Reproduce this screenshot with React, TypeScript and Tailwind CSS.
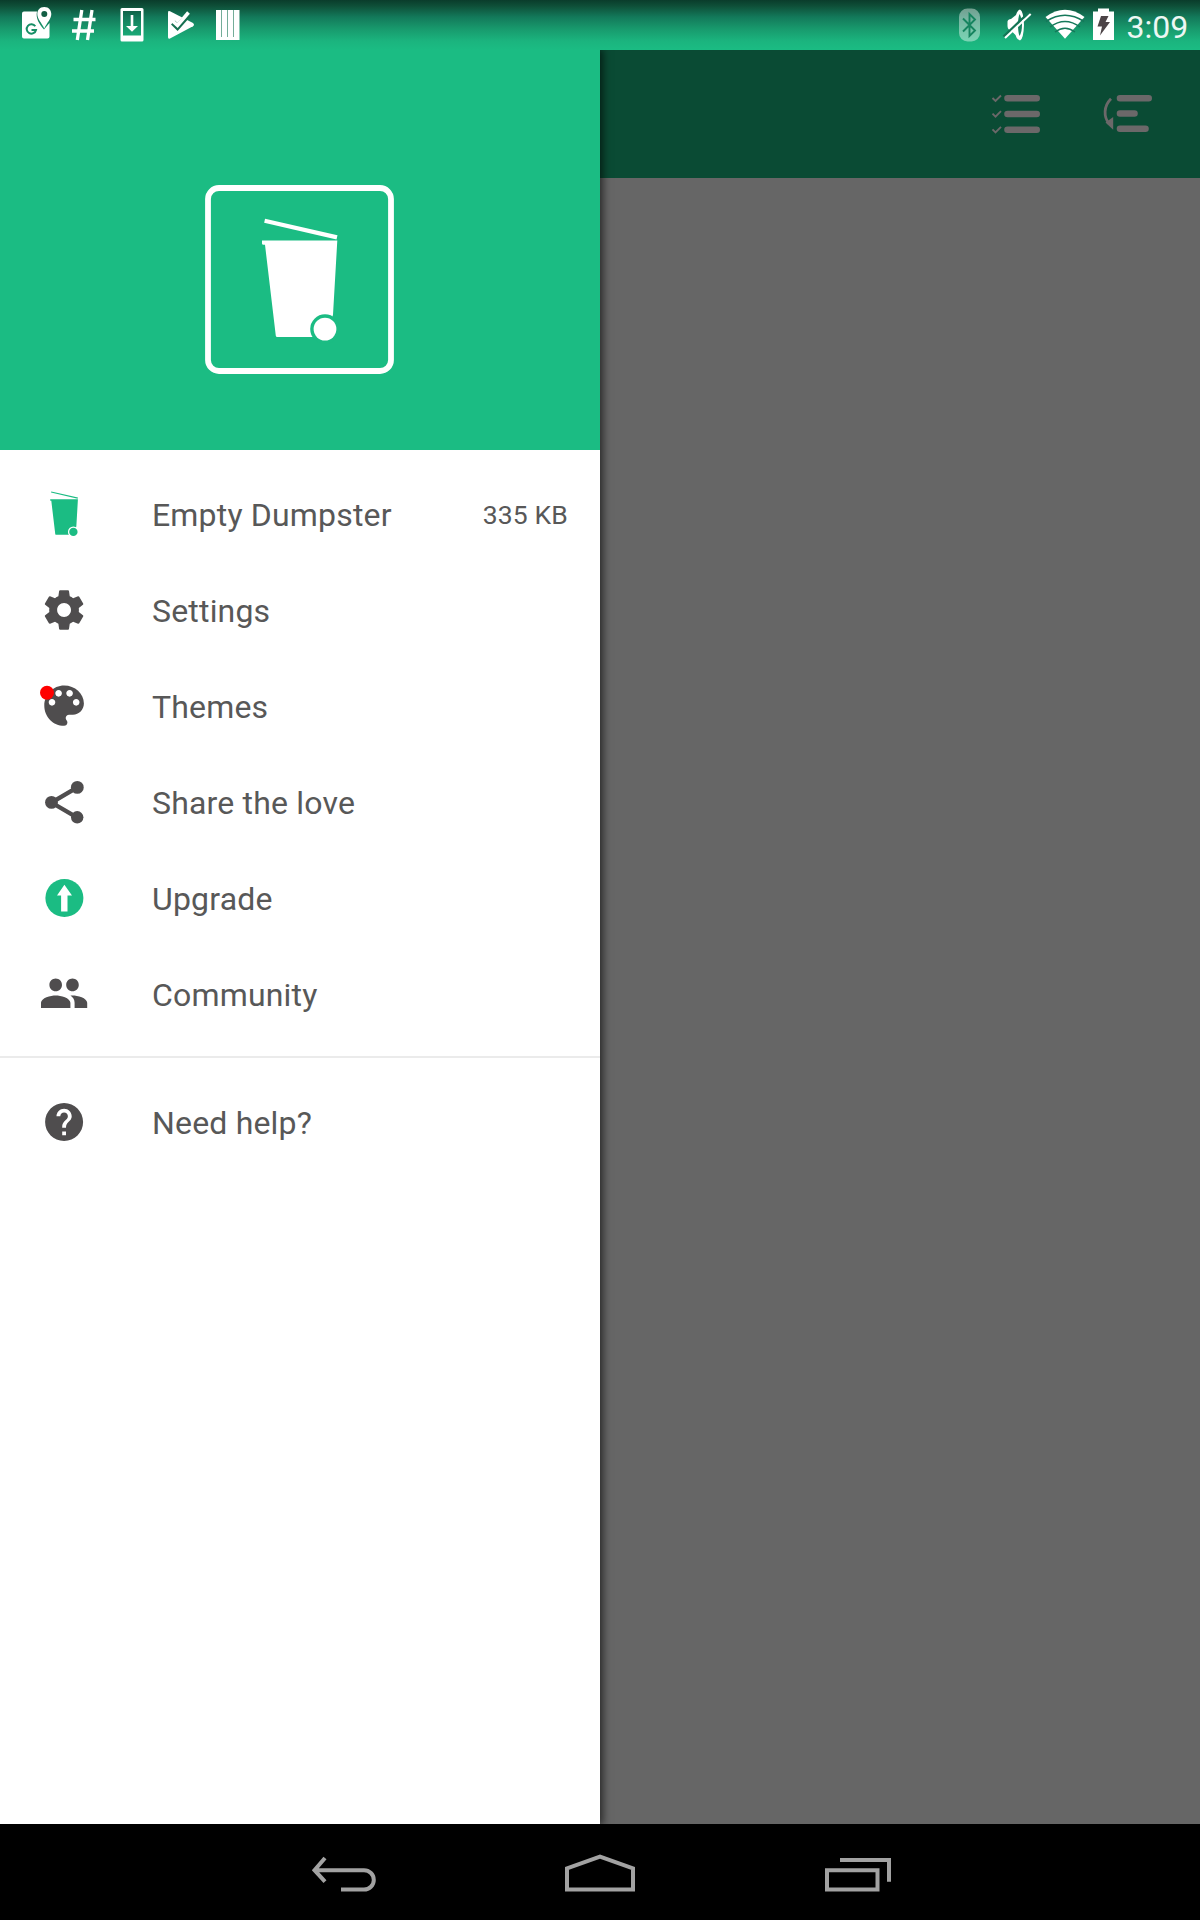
import type { ReactNode } from "react";

const GREEN = "#1bbc83";
const GREY = "#4f4d4e";

function Dumpster({ x, y, scale, color, gap, lid }: { x: number; y: number; scale: number; color: string; gap: string; lid: number }) {
  return (
    <g transform={`translate(${x} ${y}) scale(${scale})`} fill={color}>
      <path d="M2.6 2 L75 18.6" stroke={color} strokeWidth={lid} fill="none" />
      <path d="M0 21.8 H75.3 L71 96 L67 118.3 H15.2 Q14 118.3 13.8 117 L3 26 H1.5 Q0 26 0 24.6 Z" />
      <path d="M71 96 L67 119 H76 V96 Z" fill={gap} />
      <circle cx="63" cy="110.3" r="14.8" fill={gap} />
      <circle cx="63" cy="110.3" r="11.4" />
    </g>
  );
}

function MenuIcon({ children }: { children: ReactNode }) {
  return (
    <svg className="ml-[34px] h-[60px] w-[60px] shrink-0" viewBox="0 0 60 60">
      {children}
    </svg>
  );
}

function Row({ icon, label, value }: { icon: ReactNode; label: string; value?: string }) {
  return (
    <li className="flex h-24 items-center pr-8">
      <MenuIcon>{icon}</MenuIcon>
      <span className="mt-[2px] ml-[58px] text-[32px] leading-[38px] tracking-[0.18px] whitespace-nowrap text-[#585858]">{label}</span>
      {value && <span className="mt-[2px] ml-auto text-[26.5px] tracking-[0.15px] whitespace-nowrap text-[#585858]">{value}</span>}
    </li>
  );
}

const dumpster = <Dumpster x={16.2} y={7.3} scale={0.368} color={GREEN} gap="#fff" lid={3} />;

const gear = (
  <path
    fill={GREY}
    transform="translate(6.3 6.2) scale(1.98)"
    d="M19.43 12.98c.04-.32.07-.64.07-.98s-.03-.66-.07-.98l2.11-1.65c.19-.15.24-.42.12-.64l-2-3.46c-.12-.22-.39-.3-.61-.22l-2.49 1c-.52-.4-1.08-.73-1.69-.98l-.38-2.65C14.46 2.18 14.25 2 14 2h-4c-.25 0-.46.18-.49.42l-.38 2.65c-.61.25-1.17.59-1.69.98l-2.49-1c-.23-.09-.49 0-.61.22l-2 3.46c-.13.22-.07.49.12.64l2.11 1.65c-.04.32-.07.65-.07.98s.03.66.07.98l-2.11 1.65c-.19.15-.24.42-.12.64l2 3.46c.12.22.39.3.61.22l2.49-1c.52.4 1.08.73 1.69.98l.38 2.65c.03.24.24.42.49.42h4c.25 0 .46-.18.49-.42l.38-2.65c.61-.25 1.17-.59 1.69-.98l2.49 1c.23.09.49 0 .61-.22l2-3.46c.12-.22.07-.49-.12-.64l-2.11-1.65zM12 15.5c-1.93 0-3.5-1.57-3.5-3.5s1.57-3.5 3.5-3.5 3.5 1.57 3.5 3.5-1.57 3.5-3.5 3.5z"
  />
);

const palette = (
  <>
    <path
      fill={GREY}
      transform="translate(3.7 2.8) scale(2.2 2.24)"
      d="M12 3c-4.97 0-9 4.03-9 9s4.03 9 9 9c.83 0 1.5-.67 1.5-1.5 0-.39-.15-.74-.39-1.01-.23-.26-.38-.61-.38-.99 0-.83.67-1.5 1.5-1.5H16c2.76 0 5-2.24 5-5 0-4.42-4.03-8-9-8zm-5.5 9c-.83 0-1.5-.67-1.5-1.5S5.67 9 6.5 9 8 9.67 8 10.5 7.33 12 6.5 12zm3-4C8.67 8 8 7.33 8 6.5S8.67 5 9.5 5s1.5.67 1.5 1.5S10.33 8 9.5 8zm5 0c-.83 0-1.5-.67-1.5-1.5S13.67 5 14.5 5s1.5.67 1.5 1.5S15.33 8 14.5 8zm3 4c-.83 0-1.5-.67-1.5-1.5S16.67 9 17.5 9s1.5.67 1.5 1.5-.67 1.5-1.5 1.5z"
    />
    <circle cx="13" cy="16.8" r="7" fill="#f00" />
  </>
);

const share = (
  <g fill={GREY} stroke={GREY} transform="translate(0 0.6)">
    <path d="M43.3 14.8 L17.5 30 L43.3 45" fill="none" strokeWidth="4.3" />
    <circle cx="43.3" cy="14.8" r="6.4" stroke="none" />
    <circle cx="17.5" cy="29.8" r="6.4" stroke="none" />
    <circle cx="43.2" cy="44.7" r="6.2" stroke="none" />
  </g>
);

const upgrade = (
  <g transform="translate(0 0.6)">
    <circle cx="30.4" cy="29.4" r="19" fill={GREEN} />
    <path d="M30.4 16.2 L38 26.8 H33.5 V43 H27.1 V26.8 H23 Z" fill="#fff" />
  </g>
);

const people = (
  <path
    fill={GREY}
    transform="translate(4.9 4.1) scale(2.1)"
    d="M16 11c1.66 0 2.99-1.34 2.99-3S17.66 5 16 5c-1.66 0-3 1.34-3 3s1.34 3 3 3zm-8 0c1.66 0 2.99-1.34 2.99-3S9.66 5 8 5C6.34 5 5 6.34 5 8s1.34 3 3 3zm0 2c-2.33 0-7 1.17-7 3.5V19h14v-2.5c0-2.33-4.67-3.5-7-3.5zm8 0c-.29 0-.62.02-.97.05 1.16.84 1.97 1.97 1.97 3.45V19h6v-2.5c0-2.33-4.67-3.5-7-3.5z"
  />
);

const help = (
  <path
    fill={GREY}
    transform="translate(7.3 7.2) scale(1.9)"
    d="M12 2C6.48 2 2 6.48 2 12s4.48 10 10 10 10-4.48 10-10S17.52 2 12 2zm1 17h-2v-2h2v2zm2.07-7.75l-.9.92C13.45 12.9 13 13.5 13 15h-2v-.5c0-1.1.45-2.1 1.17-2.83l1.24-1.26c.37-.36.59-.86.59-1.41 0-1.1-.9-2-2-2s-2 .9-2 2H8c0-2.21 1.79-4 4-4s4 1.79 4 4c0 .88-.36 1.68-.93 2.25z"
  />
);

function StatusBar() {
  return (
    <header className="flex h-[50px] shrink-0 items-start justify-between bg-[linear-gradient(to_bottom,#0a3c2b_0px,#0e4f38_6px,#13795a_17px,#189a6d_29px,#1bb47e_41px,#1bbc83_50px)]">
      <svg className="h-[50px] w-[260px]" viewBox="0 0 260 50" fill="#fff">
        <path d="M24 11.5 H37 C35.5 18 39 24 44 29.5 L49.5 23 V36.5 Q49.5 38.5 47.5 38.5 H24 Q22 38.5 22 36.5 V13.5 Q22 11.5 24 11.5Z" />
        <path d="M35.3 26.3 A4.7 4.7 0 1 0 36 30 H31.5" fill="none" stroke="#178e66" strokeWidth="2" />
        <path d="M44.3 7 C39.5 7 37.3 10.5 37.3 14 C37.3 19 41.5 22.5 44.3 28.5 C47 22.5 51.3 19 51.3 14 C51.3 10.5 49 7 44.3 7Z" />
        <circle cx="44.3" cy="14" r="3" fill="#125e44" />
        <path d="M81.8 10 L77.3 40 M92 10 L87.5 40 M73.5 19.5 H95.5 M72 31 H94" stroke="#fff" strokeWidth="3.3" />
        <path fillRule="evenodd" d="M122 8 H142 Q143.5 8 143.5 9.5 V40 Q143.5 41.5 142 41.5 H122 Q120.5 41.5 120.5 40 V9.5 Q120.5 8 122 8Z M123 11 V35.5 H141 V11Z" />
        <path d="M130.7 15 H133.3 V26 H138 L132 31.7 L126 26 H130.7Z" />
        <path d="M168 12.5 Q168 10.5 170 11.3 L193 23 Q195 25 193 26.3 L170 38.5 Q168 39.5 168 37Z" />
        <path d="M173 22.5 L177.5 27 L189 14" fill="none" stroke="#156f50" strokeWidth="5.6" />
        <path d="M172 20.5 L177.5 25.5 L188.5 12.5" fill="none" stroke="#fff" strokeWidth="3.6" />
        <path d="M216 10 H221 V40 H216Z M222 10 H227 V40 H222Z M228 10 H233 V40 H228Z M234 10 H239.5 V40 H234Z" />
        <path d="M221.5 37 V40 M227.5 37 V40 M233.5 37 V40" stroke="#fff" strokeWidth="1" />
        <path d="M221.5 10 V37 M227.5 10 V37 M233.5 10 V37" stroke="#74ad99" strokeWidth="1" />
      </svg>
      <div className="flex h-[50px]">
        <svg className="h-[50px] w-[178px]" viewBox="940 0 178 50" fill="#fff">
          <rect x="959" y="8.5" width="21" height="33" rx="8.5" opacity=".42" />
          <path d="M963 18.5 L975 30.5 L969.5 36 V14 L975 19.5 L963 31.5" fill="none" stroke="#16845f" strokeWidth="1.9" />
          <path d="M1007.5 21.5 Q1008 19 1011 19 L1016 15 Q1017.500 10 1020 9.500 Q1023.500 11 1024 25 Q1023.500 39 1020 40.500 Q1017 40 1015.500 35 L1011 30.500 Q1007.500 29.500 1007.500 26Z" />
          <path d="M1019.500 14 Q1022 18 1022 25 Q1022 32 1019.500 36 Q1018 32 1018 25 Q1018 18 1019.500 14Z" fill="#16845f" />
          <path d="M1003.500 36.500 L1029 12.500" stroke="#147455" strokeWidth="2.400" />
          <path d="M1005 38 L1030.700 14" stroke="#fff" strokeWidth="2" />
          <path d="M1045.5 17 Q1065 2.5 1084.5 17 L1065 38.8Z" />
          <g fill="none" stroke="#15785a" strokeWidth="1.5">
            <path d="M1046 21.5 Q1065 9 1084 21.5" />
            <path d="M1050 27 Q1065 16 1080 27" />
            <path d="M1055 32 Q1065 24.5 1075 32" />
          </g>
          <path d="M1098 8.5 H1109 V11.5 H1114 V40 H1093 V11.5 H1098Z" />
          <path d="M1101 16 H1108.5 L1105.5 22 H1110 L1100 35.5 L1102 26.5 H1097.5Z" fill="#4c4447" />
        </svg>
        <span className="mt-[8px] w-[82px] pl-[8.5px] text-[32px] leading-[38px] text-[#ecf7f3]">3:09</span>
      </div>
    </header>
  );
}

function Drawer() {
  return (
    <aside className="z-10 w-[600px] shrink-0 bg-white shadow-[2px_0_8px_1px_rgba(0,0,0,0.6)]">
      <div className="h-[400px] bg-[#1bbc83]">
        <svg className="h-[400px] w-[600px]" viewBox="0 50 600 400">
          <rect x="208" y="188" width="183" height="183" rx="11" fill="none" stroke="#fff" strokeWidth="5.8" />
          <Dumpster x={262} y={218.8} scale={1} color="#fff" gap={GREEN} lid={4.2} />
        </svg>
      </div>
      <ul className="mt-4">
        <Row icon={dumpster} label="Empty Dumpster" value="335 KB" />
        <Row icon={gear} label="Settings" />
        <Row icon={palette} label="Themes" />
        <Row icon={share} label="Share the love" />
        <Row icon={upgrade} label="Upgrade" />
        <Row icon={people} label="Community" />
      </ul>
      <hr className="mt-[14px] mb-4 h-[2px] border-0 bg-[#ebebeb]" />
      <ul>
        <Row icon={help} label="Need help?" />
      </ul>
    </aside>
  );
}

function Toolbar() {
  return (
    <div className="flex h-32 justify-end bg-[#0a4b34]">
      <svg className="h-32 w-60" viewBox="960 50 240 128" fill="none" stroke="#6b6869">
        <path d="M1007.5 98.3 H1036.7 M1007.5 114 H1036.7 M1007.5 129.7 H1036.7" strokeWidth="6.6" strokeLinecap="round" />
        <path d="M992.5 98 L995.5 101 L1001 95.5 M992.5 113.6 L995.5 116.6 L1001 111.1 M992.5 129.3 L995.5 132.3 L1001 126.8" strokeWidth="1.9" />
        <path d="M1120 98.3 H1148.7 M1120 113.5 H1134.5 M1120 128.8 H1145.5" strokeWidth="6.6" strokeLinecap="round" />
        <path d="M1111 98.7 C1103.5 106 1103.5 117 1109 123.5" strokeWidth="2.8" />
        <path d="M1113.2 117 V129.7 L1105.5 122.5Z" fill="#6b6869" stroke="none" />
      </svg>
    </div>
  );
}

function NavigationBar() {
  return (
    <nav className="flex h-24 shrink-0 items-center justify-center bg-black">
      <svg className="h-24 w-[620px]" viewBox="290 1824 620 96" fill="none" stroke="#a2a2a2" strokeWidth="4">
        <path d="M325 1858 L314.500 1870.200 L325 1881.700 M314 1870.200 H364 A9.800 9.700 0 0 1 364 1889.600 H341" />
        <path d="M567 1889.600 V1868.300 L600 1856.500 L633 1868.300 V1889.600Z" />
        <path d="M827 1870.200 H877.500 V1889.600 H827Z M840 1860 H889 V1881.700" />
      </svg>
    </nav>
  );
}

export default function App() {
  return (
    <div className="flex h-[1920px] w-[1200px] flex-col overflow-hidden bg-[#666] font-[Roboto,sans-serif]">
      <StatusBar />
      <main className="flex min-h-0 flex-1 overflow-hidden">
        <Drawer />
        <section className="flex-1">
          <Toolbar />
        </section>
      </main>
      <NavigationBar />
    </div>
  );
}
